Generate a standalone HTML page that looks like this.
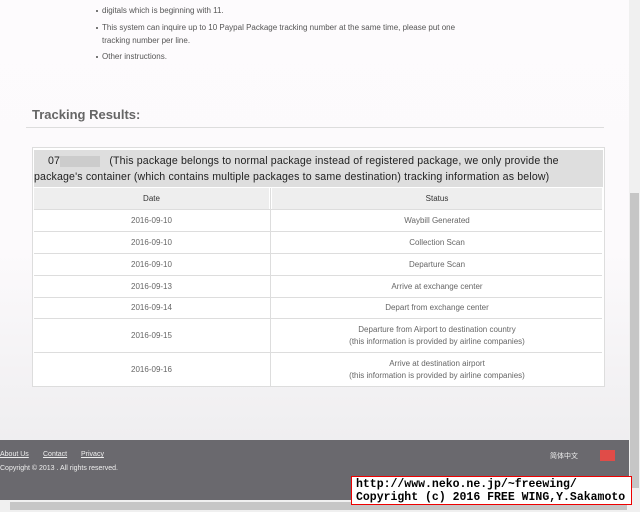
<!DOCTYPE html>
<html><head><meta charset="utf-8"><style>
*{margin:0;padding:0;box-sizing:border-box}
body{width:640px;height:512px;overflow:hidden;position:relative;font-family:"Liberation Sans","Noto Sans CJK JP",sans-serif;background:linear-gradient(#fdfbfd 0,#fcfafc 250px,#efeef0 440px);color:#555}
.abs{position:absolute}
ul{position:absolute;left:102px;top:-9px;font-size:8px;color:#555;line-height:13px;list-style:none}
li{position:relative;padding-left:0}
li:before{content:"";position:absolute;left:-6px;top:6px;width:2px;height:2px;background:#777}
h2{position:absolute;left:32px;top:107px;font-size:13px;font-weight:bold;color:#666}
.hr{left:26px;top:127px;width:578px;height:1px;background:#ddd}
.box{left:32px;top:147px;width:573px;height:240px;border:1px solid #ddd;background:#fff}
.note{left:34px;top:150px;width:569px;height:37px;background:#dedede;font-size:10.6px;letter-spacing:0.15px;color:#222;line-height:16px;padding-top:3px;white-space:nowrap;overflow:hidden}
.cell{position:absolute;font-size:8px;color:#666;text-align:center;display:flex;align-items:center;justify-content:center;flex-direction:column;line-height:12px}
.hd{background:#eee;color:#333}
.line{position:absolute;height:1px;background:#ddd}
.foot{left:0;top:440px;width:629px;height:60px;background:#6a696e;font-size:7px;color:#eee}
</style></head><body>
<ul>
<li style="height:13px"></li>
<li>digitals which is beginning with 11.</li>
<li style="margin-top:4px">This system can inquire up to 10 Paypal Package tracking number at the same time, please put one<br>tracking number per line.</li>
<li style="margin-top:3px">Other instructions.</li>
</ul>
<h2>Tracking Results:</h2>
<div class="abs hr"></div>
<div class="abs box"></div>
<div class="abs note"><span style="padding-left:14px">07<span style="display:inline-block;width:40px;height:11px;background:#ccc;vertical-align:middle"></span>&nbsp;&nbsp;&nbsp;(This package belongs to normal package instead of registered package, we only provide the</span><br>package's container (which contains multiple packages to same destination) tracking information as below)</div>
<div class="cell hd" style="left:34px;top:188px;width:235px;height:21px">Date</div>
<div class="cell hd" style="left:272px;top:188px;width:330px;height:21px">Status</div>
<div class="cell" style="left:34px;top:210px;width:235px;height:21px">2016-09-10</div><div class="cell" style="left:272px;top:210px;width:330px;height:21px">Waybill Generated</div>
<div class="cell" style="left:34px;top:232px;width:235px;height:21px">2016-09-10</div><div class="cell" style="left:272px;top:232px;width:330px;height:21px">Collection Scan</div>
<div class="cell" style="left:34px;top:254px;width:235px;height:21px">2016-09-10</div><div class="cell" style="left:272px;top:254px;width:330px;height:21px">Departure Scan</div>
<div class="cell" style="left:34px;top:276px;width:235px;height:21px">2016-09-13</div><div class="cell" style="left:272px;top:276px;width:330px;height:21px">Arrive at exchange center</div>
<div class="cell" style="left:34px;top:298px;width:235px;height:20px">2016-09-14</div><div class="cell" style="left:272px;top:298px;width:330px;height:20px">Depart from exchange center</div>
<div class="cell" style="left:34px;top:319px;width:235px;height:33px">2016-09-15</div><div class="cell" style="left:272px;top:319px;width:330px;height:33px">Departure from Airport to destination country<br>(this information is provided by airline companies)</div>
<div class="cell" style="left:34px;top:353px;width:235px;height:33px">2016-09-16</div><div class="cell" style="left:272px;top:353px;width:330px;height:33px">Arrive at destination airport<br>(this information is provided by airline companies)</div>
<div class="line" style="left:34px;top:209px;width:568px"></div>
<div class="line" style="left:34px;top:231px;width:568px"></div>
<div class="line" style="left:34px;top:253px;width:568px"></div>
<div class="line" style="left:34px;top:275px;width:568px"></div>
<div class="line" style="left:34px;top:297px;width:568px"></div>
<div class="line" style="left:34px;top:318px;width:568px"></div>
<div class="line" style="left:34px;top:352px;width:568px"></div>
<div class="line" style="left:34px;top:386px;width:568px"></div>
<div class="abs" style="left:270px;top:188px;width:1px;height:198px;background:#ddd"></div>
<div class="abs foot">
<div class="abs" style="left:0;top:11px;text-decoration:underline">About Us</div>
<div class="abs" style="left:43px;top:11px;text-decoration:underline">Contact</div>
<div class="abs" style="left:81px;top:11px;text-decoration:underline">Privacy</div>
<div class="abs" style="left:0;top:25px">Copyright © 2013 . All rights reserved.</div>
<div class="abs" style="left:550px;top:11px">简体中文</div>
<div class="abs" style="left:600px;top:10px;width:15px;height:11px;background:#e04c48"></div>
</div>
<div class="abs" style="left:629px;top:0;width:11px;height:500px;background:#f0f0f0"></div>
<div class="abs" style="left:630px;top:193px;width:9px;height:295px;background:#c6c6c6"></div>
<div class="abs" style="left:0;top:500px;width:640px;height:12px;background:#f0f0f0"></div>
<div class="abs" style="left:10px;top:502px;width:617px;height:8px;background:#c6c6c6"></div>
<div class="abs" style="left:351px;top:476px;width:281px;height:29px;background:#fff;border:1px solid #e00;font-family:'Liberation Mono',monospace;font-size:11.5px;font-weight:bold;color:#000;line-height:13px;padding:1px 0 0 4px;white-space:nowrap">http://www.neko.ne.jp/~freewing/<br>Copyright (c) 2016 FREE WING,Y.Sakamoto</div>
</body></html>
